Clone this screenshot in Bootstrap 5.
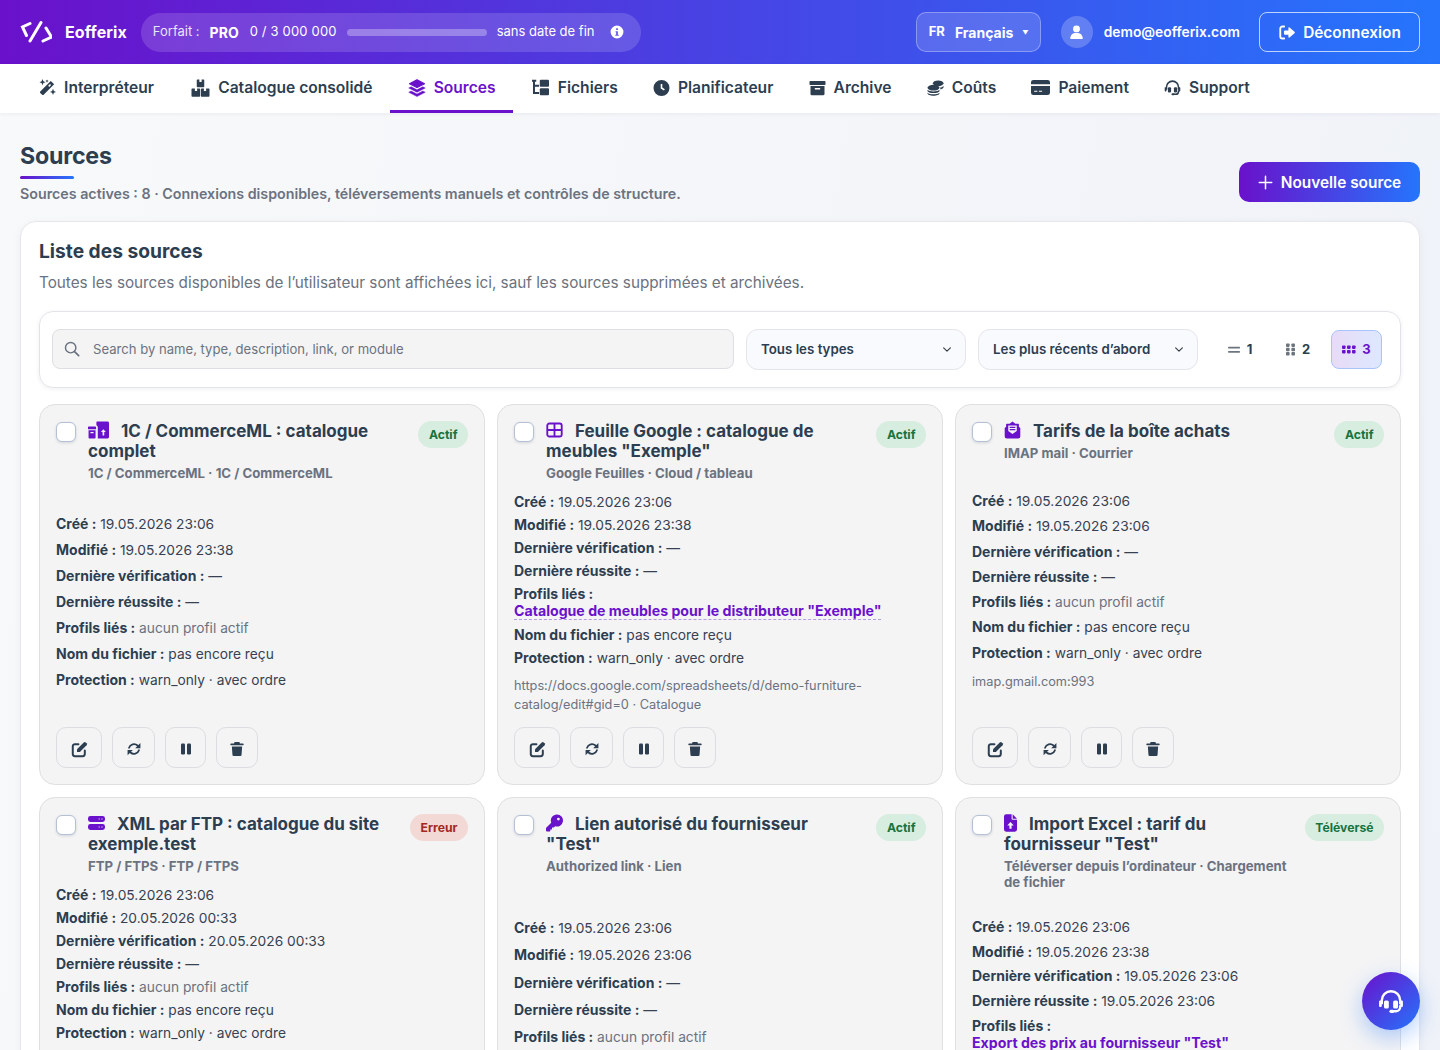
<!DOCTYPE html>
<html lang="fr">
<head>
<meta charset="UTF-8">
<title>Sources - Eofferix</title>
<link href="https://cdn.jsdelivr.net/npm/bootstrap@5.3.0/dist/css/bootstrap.min.css" rel="stylesheet">
<style>
    body { font-family: Inter, "Liberation Sans", sans-serif; background: linear-gradient(100deg, #f8f9fa, #eff2f8); color: #2c3e50; font-size: 14px; }
    .ico { display: inline-block; fill: currentColor; flex: none; }
    .top-bar { height: 64px; padding: 0 20px; background: linear-gradient(90deg, #6a11cb, #2575fc); color: #fff; }
    .logo-name { font-size: 16px; font-weight: 700; margin-left: 13px; letter-spacing: .1px; }
    .logo-ico { width: 32px; height: 24px; fill: none; stroke: #fff; stroke-width: 3; stroke-linecap: round; stroke-linejoin: miter; }
    .plan-pill { height: 39px; margin-left: 14px; width: 500px; padding: 0 12px; border-radius: 20px; background: rgba(255,255,255,.15); font-size: 13px; white-space: nowrap; }
    .plan-pill b { font-size: 14px; font-weight: 700; margin: 0 11px 0 10px; }
    .plan-label { color: rgba(255,255,255,.88); }
    .plan-count { letter-spacing: .17px; }
    .plan-bar { width: 140px; height: 7px; border-radius: 4px; background: rgba(255,255,255,.3); margin: 0 10px; }
    .lang-btn { width: 125px; height: 40px; border-radius: 10px; border: 1px solid rgba(255,255,255,.3); background: rgba(255,255,255,.15); font-weight: 700; font-size: 14px; color: #fff; padding: 0 12px; }
    .lang-btn small { font-size: 13px; font-weight: 700; margin-right: 10px; }
    .lang-caret { font-size: 6px; margin-left: 9px; }
    .user-ava { width: 32px; height: 32px; border-radius: 50%; background: rgba(255,255,255,.22); margin: 0 11px 0 20px; }
    .user-mail { font-size: 13.8px; font-weight: 600; }
    .out-btn { width: 161px; height: 40px; margin-left: 19px; border-radius: 8px; border: 1px solid rgba(255,255,255,.7); color: #fff; font-size: 15.4px; font-weight: 600; gap: 7px; padding: 1px 0 0; }
    .out-btn:hover { color: #fff; }
    .tab-bar { height: 49px; padding: 0 20.5px; background: #fff; box-shadow: 0 1px 4px rgba(20,30,60,.06); }
    .tab-bar .nav-link { height: 49px; padding: 1px 17.6px 0; gap: 8px; color: #2c3e50; font-size: 15.6px; font-weight: 600; border-bottom: 3px solid transparent; white-space: nowrap; }
    .tab-bar .nav-link:first-child { padding-right: 19.6px; }
    .tab-bar .nav-link.active { color: #6a11cb; border-bottom-color: #6a11cb; }
    .page-wrap { padding: 29px 20px 40px; }
    .page-title { font-size: 23.2px; font-weight: 700; line-height: 29px; margin: 0; letter-spacing: -.2px; }
    .title-line { width: 54px; height: 3px; border-radius: 2px; margin: 5px 0 6px; background: linear-gradient(90deg, #6a11cb, #2575fc); }
    .page-sub { font-size: 14.25px; font-weight: 600; color: #6b7280; line-height: 17px; }
    .new-btn { width: 181px; height: 40px; border: 0; border-radius: 10px; background: linear-gradient(90deg, #6a11cb, #2575fc); color: #fff; font-size: 15.4px; font-weight: 600; gap: 8px; padding: 1px 0 0; }
    .new-btn:hover { color: #fff; }
    .list-panel { margin-top: 19px; border: 1px solid #e5e7eb; border-radius: 16px; padding: 17px 18px 18px; box-shadow: 0 2px 8px rgba(20,30,60,.05); }
    .list-title { font-size: 19.2px; font-weight: 700; line-height: 24px; margin: 0; }
    .list-sub { font-size: 15.27px; color: #6b7280; line-height: 20px; margin: 10px 0 18px; }
    .filter-box { padding: 17px 12px; border: 1px solid #e2e4e8; border-radius: 14px; box-shadow: 0 1px 4px rgba(20,30,60,.07); gap: 12px; margin-bottom: 16px; }
    .search-wrap { flex: 1; }
    .search-ico { position: absolute; left: 12px; top: 12px; color: #6b7280; }
    .search-input { height: 40px; padding: 0 12px 0 40px; background: #f4f4f5; border: 1px solid #dedfe2; border-radius: 8px; font-size: 13.1px; }
    .search-input::placeholder { color: #6b7280; }
    .sel-box { width: 220px; height: 41px; border-radius: 12px; border: 1px solid #e4e5ea; background-color: #f9fafd; color: #2c3e50; font-size: 13.3px; font-weight: 600; padding: 0 36px 0 14px; background-size: 12px 9px; }
    .seg-wrap { gap: 8px; margin: 0 6px 0 5px; }
    .seg-btn { height: 39px; width: 50px; padding: 0; gap: 6px; border: 1px solid transparent; border-radius: 8px; font-size: 13px; font-weight: 700; color: #2c3e50; }
    .seg-btn.on { background: linear-gradient(90deg, #e8dbf7, #dde8fe); border-color: #a9c3fb; color: #6a11cb; width: 51px; }
    .src-grid { --bs-gutter-x: 12px; --bs-gutter-y: 12px; }
    .src-card { height: 100%; background: #f4f4f5; border: 1px solid #dfe0e2; border-radius: 16px; padding: 16px; }
    .chk-box { width: 20px; height: 20px; margin: 1px 12px 0 0; flex: none; border-radius: 6px; border: 1px solid #b4c0d4; background: #fff; box-shadow: 0 1px 3px rgba(20,30,60,.15); }
    .src-title { font-size: 17px; font-weight: 700; line-height: 20px; margin: 0; }
    .src-title .ico { height: 18px; margin-right: 12px; vertical-align: -2px; color: #6a11cb; }
    .src-meta { font-size: 13.2px; font-weight: 700; color: #6b7280; line-height: 16px; margin-top: 4px; }
    .stat-pill { height: 27px; padding: 0 10.5px; margin-left: 16px; border-radius: 14px; font-size: 12.2px; font-weight: 700; line-height: 27px; flex: none; }
    .stat-ok { background: #d6ede0; color: #17733f; }
    .stat-err { background: #f3d9d6; color: #a5281f; }
    .fld-list { line-height: 17px; display: flex; flex-direction: column; color: #374151; font-size: 13.75px; }
    /* label and value differ slightly in size, keep the label out of the line box height */
    .fld-list b { font-weight: 700; color: #2c3e50; font-size: 14px; line-height: 0; }
    .fld-muted { color: #6b7280; }
    .fld-link { display: inline-block; color: #6a11cb; font-size: 14.15px; font-weight: 700; text-decoration: none; border-bottom: 1px dashed #b79adf; line-height: 16px; margin-bottom: 1px; vertical-align: top; }
    .fld-url { font-size: 12.75px; line-height: 19px; color: #6b7280; }
    .act-row { gap: 10px; margin-top: auto; }
    .act-btn { height: 41px; width: 42px; padding: 0; border: 1px solid #dcdde0; border-radius: 10px; color: #2c3e50; }
    .act-wide { width: 46px; }
    .act-mid { width: 43px; }
    .act-thin { width: 41px; }
    .fl-a { row-gap: 9px; padding-top: 35px; }
    .fl-b { row-gap: 6px; padding-top: 13px; padding-bottom: 13px; }
    .fl-b .fld-url { margin-top: 3px; }
    .fl-c { row-gap: 8.3px; padding-top: 32px; }
    .fl-c .fld-url { margin-top: 2px; }
    .fl-d { row-gap: 6px; padding-top: 13px; padding-bottom: 20px; }
    .fl-e { row-gap: 10.3px; padding-top: 46px; padding-bottom: 20px; }
    .fl-f { row-gap: 7.7px; padding-top: 29px; padding-bottom: 20px; }
    .help-fab { position: fixed; right: 20px; bottom: 20px; width: 58px; height: 58px; border-radius: 50%; background: linear-gradient(135deg, #6a11cb, #2575fc); color: #fff; box-shadow: 0 8px 22px rgba(37,117,252,.35); }
</style>
</head>
<body>
<svg width="0" height="0" class="position-absolute">
    <symbol id="i-wand" viewBox="0 0 24 24"><path d="M17 2.500l4.500 4.500L7.500 21a1.500 1.500 0 0 1-2 0L3 18.500a1.500 1.500 0 0 1 0-2zM16 6.500l-2.500 2.500 1.500 1.500 2.500-2.500z" fill-rule="evenodd"/><path d="M6 0l1.200 3L10 4.200 7.200 5.400 6 8.400 4.800 5.400 2 4.200 4.800 3zM20 13l1.200 3 2.800 1.200-2.800 1.200-1.200 3-1.200-3-2.800-1.200 2.800-1.200zM12 .5l.7 1.500 1.500.7-1.500.7-.7 1.500-.7-1.500-1.500-.7 1.500-.7z"/></symbol>
    <symbol id="i-boxes" viewBox="0 0 24 24"><path d="M8 .5h2.500v3.500h3V.5H16a1 1 0 0 1 1 1V10a1 1 0 0 1-1 1H8a1 1 0 0 1-1-1V1.500a1 1 0 0 1 1-1z"/><path d="M1 12.500h3.500V16h3v-3.500H10.500a1 1 0 0 1 1 1V22.500a1 1 0 0 1-1 1H1a1 1 0 0 1-1-1v-9a1 1 0 0 1 1-1zM13.500 12.500H16.500V16h3v-3.500H23a1 1 0 0 1 1 1v9a1 1 0 0 1-1 1h-9.500a1 1 0 0 1-1-1v-9a1 1 0 0 1 1-1z"/></symbol>
    <symbol id="i-layers" viewBox="0 0 24 24"><path d="M12 1l10 5.200L12 11.400 2 6.200z" stroke="currentColor" stroke-width="1.500" stroke-linejoin="round"/><path d="M1 12l3.200-1.600L12 14.400l7.800-4 3.200 1.600-11 5.700zM1 17.700l3.200-1.600L12 20.100l7.800-4 3.200 1.600-11 5.700z" stroke="currentColor" stroke-width=".6" stroke-linejoin="round"/></symbol>
    <symbol id="i-tree" viewBox="0 0 24 24"><path d="M0 1h6v2.800H4.200v4.200H10v2.800H4.200v7.400H10V21H1.400V3.800H0z"/><rect x="11" y="1" width="13" height="10" rx="1.500"/><rect x="11" y="13" width="13" height="10" rx="1.500"/></symbol>
    <symbol id="i-clock" viewBox="0 0 24 24"><path fill-rule="evenodd" d="M12 0a12 12 0 1 0 0 24 12 12 0 0 0 0-24zM10.800 6h2.400v5.400l3.800 2.500-1.300 2-4.900-3.300z"/></symbol>
    <symbol id="i-archive" viewBox="0 0 24 24"><rect x="0" y="1.500" width="24" height="6" rx="1.200"/><path fill-rule="evenodd" d="M1.500 9h21V21a2 2 0 0 1-2 2h-17a2 2 0 0 1-2-2zM8 12v2.200h8V12z"/></symbol>
    <symbol id="i-coins" viewBox="0 0 24 24"><ellipse cx="16" cy="5" rx="8" ry="4.300"/><path d="M24 8.500v2.500c0 1.500-2 2.700-4.500 3.300l-.5-3c2-.3 4-1.300 5-2.800z"/><ellipse cx="9" cy="11.500" rx="9" ry="4.300"/><path d="M0 14.800c1.500 1.600 5 2.500 9 2.500s7.500-.9 9-2.500V16c0 2-4 3.600-9 3.600S0 18 0 16zM0 19c1.500 1.600 5 2.500 9 2.500s7.500-.9 9-2.500v1c0 2-4 3.800-9 3.800S0 22 0 20z"/></symbol>
    <symbol id="i-card" viewBox="0 0 24 24"><path d="M3 2.500h18A3 3 0 0 1 24 5.500V8H0V5.500A3 3 0 0 1 3 2.500z"/><path fill-rule="evenodd" d="M0 10h24v8.500a3 3 0 0 1-3 3H3a3 3 0 0 1-3-3zM4 16v1.500h4V16zM10 16v1.500h4V16z"/></symbol>
    <symbol id="i-head" viewBox="0 0 24 24"><path d="M3.500 15v-3.500a8.500 8.500 0 0 1 17 0V15M20.500 16v1.500a4 4 0 0 1-4 4H13" fill="none" stroke="currentColor" stroke-width="2.200"/><rect x="5.500" y="11.500" width="4.500" height="7.500" rx="1.500"/><rect x="14" y="11.500" width="4.500" height="7.500" rx="1.500"/><rect x="1" y="11.500" width="2.500" height="6" rx="1"/><rect x="20.500" y="11.500" width="2.500" height="6" rx="1"/><rect x="10.500" y="20" width="4.500" height="3" rx="1.500"/></symbol>
    <symbol id="i-out" viewBox="0 0 24 24"><path d="M8 3.500H5.500A3 3 0 0 0 2.500 6.500v11a3 3 0 0 0 3 3H8" fill="none" stroke="currentColor" stroke-width="2.600" stroke-linecap="round"/><path d="M14 5.500a1 1 0 0 1 1.600-.7l7 6.200a1.300 1.300 0 0 1 0 2l-7 6.200a1 1 0 0 1-1.600-.7V15H9a1.200 1.200 0 0 1-1.200-1.200v-3.600A1.200 1.200 0 0 1 9 9h5z"/></symbol>
    <symbol id="i-user" viewBox="0 0 24 24"><circle cx="12" cy="7" r="5.500"/><path d="M3 23c-.7 0-1-.5-1-1 0-5 4-8.500 8-8.500h4c4 0 8 3.500 8 8.500 0 .5-.3 1-1 1z"/></symbol>
    <symbol id="i-info" viewBox="0 0 24 24"><path fill-rule="evenodd" d="M12 1a11 11 0 1 0 0 22 11 11 0 0 0 0-22zM10.500 5.500h3v3h-3zM9.500 10.500h4v6h1.500v2H9v-2h1.500v-4h-1z"/></symbol>
    <symbol id="i-plus" viewBox="0 0 24 24"><path d="M12 2v20M2 12h20" stroke="currentColor" stroke-width="2.400" stroke-linecap="round"/></symbol>
    <symbol id="i-search" viewBox="0 0 24 24"><circle cx="10" cy="10" r="7.800" fill="none" stroke="currentColor" stroke-width="2.200"/><path d="M15.800 15.800l6.200 6.200" stroke="currentColor" stroke-width="2.600" stroke-linecap="round"/></symbol>
    <symbol id="i-edit" viewBox="0 0 24 24"><path d="M10.500 4.500H5.500a3 3 0 0 0-3 3v11a3 3 0 0 0 3 3h11a3 3 0 0 0 3-3v-5" fill="none" stroke="currentColor" stroke-width="2.800" stroke-linecap="round"/><path d="M8.500 15.500v-4L18 2a2 2 0 0 1 2.800 0l1.200 1.200a2 2 0 0 1 0 2.800L12.500 15.500z"/></symbol>
    <symbol id="i-sync" viewBox="0 0 24 24"><path d="M3.500 10a9 9 0 0 1 14.500-4l1.500 1.500M20.500 14a9 9 0 0 1-14.500 4l-1.500-1.500" fill="none" stroke="currentColor" stroke-width="3" stroke-linecap="round"/><path d="M23 1.500v9h-9zM1 22.500v-9h9z"/></symbol>
    <symbol id="i-pause" viewBox="0 0 24 24"><rect x="2" y="1" width="8" height="22" rx="2.500"/><rect x="14" y="1" width="8" height="22" rx="2.500"/></symbol>
    <symbol id="i-trash" viewBox="0 0 24 24"><path d="M8.500 0h7a1 1 0 0 1 .9.600L17 2.500h5a1.500 1.500 0 0 1 0 3H2a1.500 1.500 0 0 1 0-3h5l.6-1.900A1 1 0 0 1 8.500 0zM3.200 7.500h17.600l-1 14.500a2 2 0 0 1-2 2H6.200a2 2 0 0 1-2-2z"/></symbol>
    <symbol id="i-eq" viewBox="0 0 14 10"><rect y="1.500" width="13" height="2" rx=".8"/><rect y="6" width="13" height="2" rx=".8"/></symbol>
    <symbol id="i-g2" viewBox="0 0 10 13"><rect x="0" y=".5" width="3.600" height="3.400" rx=".8"/><rect x="5.400" y=".5" width="3.600" height="3.400" rx=".8"/><rect x="0" y="4.800" width="3.600" height="3.400" rx=".8"/><rect x="5.400" y="4.800" width="3.600" height="3.400" rx=".8"/><rect x="0" y="9.100" width="3.600" height="3.400" rx=".8"/><rect x="5.400" y="9.100" width="3.600" height="3.400" rx=".8"/></symbol>
    <symbol id="i-g3" viewBox="0 0 14 9"><rect x="0" y=".5" width="3.600" height="3.400" rx=".8"/><rect x="5" y=".5" width="3.600" height="3.400" rx=".8"/><rect x="10" y=".5" width="3.600" height="3.400" rx=".8"/><rect x="0" y="5" width="3.600" height="3.400" rx=".8"/><rect x="5" y="5" width="3.600" height="3.400" rx=".8"/><rect x="10" y="5" width="3.600" height="3.400" rx=".8"/></symbol>
    <symbol id="i-pack" viewBox="0 0 30 24"><path fill-rule="evenodd" d="M12 1a1 1 0 0 1 1-1h15a2 2 0 0 1 2 2v20a2 2 0 0 1-2 2H14V8a3 3 0 0 0-2-2.800zM22 11l-3.500 4h2.300v5h2.400v-5h2.300z"/><path fill-rule="evenodd" d="M0 8a1 1 0 0 1 1-1h9.500a1 1 0 0 1 1 1v3H0zM.8 12.500h10v10.500a1 1 0 0 1-1 1H2a1.200 1.200 0 0 1-1.200-1.200zM3.500 15v1.800H8V15z"/></symbol>
    <symbol id="i-table" viewBox="0 0 24 24"><rect x="1.800" y="2.800" width="20.400" height="18.400" rx="3" fill="none" stroke="currentColor" stroke-width="2.600"/><path d="M12 3v18M2 12h20" stroke="currentColor" stroke-width="2.600"/></symbol>
    <symbol id="i-mail" viewBox="0 0 24 24"><path fill-rule="evenodd" d="M12 0l4 3h4a1 1 0 0 1 1 1v3.500l2 1.500v12a3 3 0 0 1-3 3H4a3 3 0 0 1-3-3V9l2-1.500V4a1 1 0 0 1 1-1h4zM6 5.500v7.800l6 4.200 6-4.200V5.500zM8 7.500h8v1.800H8zM8 10.700h8v1.800H8z"/></symbol>
    <symbol id="i-server" viewBox="0 0 24 24"><path fill-rule="evenodd" d="M3.500 2h17A3.500 3.500 0 0 1 24 5.500v1.500A3.500 3.500 0 0 1 20.500 10.500h-17A3.500 3.500 0 0 1 0 7V5.500A3.500 3.500 0 0 1 3.500 2zM15 5.500v1.500h1.500V5.500zM19 5.500v1.500h1.500V5.500zM3.500 13.500h17A3.500 3.500 0 0 1 24 17v1.500A3.500 3.500 0 0 1 20.500 22h-17A3.500 3.500 0 0 1 0 18.500V17A3.500 3.500 0 0 1 3.500 13.500zM15 17v1.500h1.500V17zM19 17v1.500h1.500V17z"/></symbol>
    <symbol id="i-key" viewBox="0 0 24 24"><path fill-rule="evenodd" d="M15.500 0a8.500 8.500 0 1 1-2.600 16.600L11 18.500H8.500V21H6v2.400a.6.600 0 0 1-.6.600H1.500a1.500 1.500 0 0 1-1.500-1.500v-3.100a1 1 0 0 1 .3-.7l7.100-7.100A8.500 8.500 0 0 1 15.500 0zM17.500 4.500a2 2 0 1 0 0 4 2 2 0 0 0 0-4z"/></symbol>
    <symbol id="i-file" viewBox="0 0 18 24"><path fill-rule="evenodd" d="M3 0h7.500v6a1.500 1.500 0 0 0 1.500 1.500h6V21a3 3 0 0 1-3 3H3a3 3 0 0 1-3-3V3a3 3 0 0 1 3-3zM12 0l6 6h-6zM9 10.500l-4.500 4.800h3V20h3v-4.700h3z"/></symbol>
</svg>

<header class="top-bar d-flex align-items-center">
    <svg class="ico logo-ico" viewBox="0 0 32 24"><path d="M10 3.500L2.500 7l4 8.500M21 2.500L10 21M26 8l5.500 9-8.500 4"/></svg>
    <span class="logo-name">Eofferix</span>
    <div class="plan-pill d-flex align-items-center">
        <span class="plan-label">Forfait :</span><b>PRO</b><span class="plan-count">0 / 3 000 000</span>
        <span class="plan-bar"></span>
        <span>sans date de fin</span>
        <svg class="ico ms-3" width="14" height="14"><use href="#i-info"/></svg>
    </div>
    <div class="ms-auto d-flex align-items-center">
        <button class="lang-btn d-flex align-items-center" type="button"><small>FR</small>Français<span class="lang-caret">▼</span></button>
        <span class="user-ava d-flex align-items-center justify-content-center"><svg class="ico" width="15" height="16"><use href="#i-user"/></svg></span>
        <span class="user-mail">demo@eofferix.com</span>
        <a class="btn out-btn d-flex align-items-center justify-content-center" href="#"><svg class="ico" width="18" height="17"><use href="#i-out"/></svg>Déconnexion</a>
    </div>
</header>

<nav class="nav tab-bar">
    <a class="nav-link d-flex align-items-center" href="#"><svg class="ico" width="18" height="18"><use href="#i-wand"/></svg>Interpréteur</a>
    <a class="nav-link d-flex align-items-center" href="#"><svg class="ico" width="19" height="18"><use href="#i-boxes"/></svg>Catalogue consolidé</a>
    <a class="nav-link active d-flex align-items-center" href="#"><svg class="ico" width="18" height="18"><use href="#i-layers"/></svg>Sources</a>
    <a class="nav-link d-flex align-items-center" href="#"><svg class="ico" width="19" height="17"><use href="#i-tree"/></svg>Fichiers</a>
    <a class="nav-link d-flex align-items-center" href="#"><svg class="ico" width="17" height="16"><use href="#i-clock"/></svg>Planificateur</a>
    <a class="nav-link d-flex align-items-center" href="#"><svg class="ico" width="17" height="16"><use href="#i-archive"/></svg>Archive</a>
    <a class="nav-link d-flex align-items-center" href="#"><svg class="ico" width="17" height="16"><use href="#i-coins"/></svg>Coûts</a>
    <a class="nav-link d-flex align-items-center" href="#"><svg class="ico" width="19" height="19"><use href="#i-card"/></svg>Paiement</a>
    <a class="nav-link d-flex align-items-center" href="#"><svg class="ico" width="17" height="17"><use href="#i-head"/></svg>Support</a>
</nav>

<main class="page-wrap">
    <div class="d-flex justify-content-between align-items-end">
        <div>
            <h1 class="page-title">Sources</h1>
            <div class="title-line"></div>
            <div class="page-sub">Sources actives : 8 · Connexions disponibles, téléversements manuels et contrôles de structure.</div>
        </div>
        <a class="btn new-btn d-flex align-items-center justify-content-center" href="#"><svg class="ico" width="15" height="15"><use href="#i-plus"/></svg>Nouvelle source</a>
    </div>

    <section class="card list-panel">
        <h2 class="list-title">Liste des sources</h2>
        <p class="list-sub">Toutes les sources disponibles de l’utilisateur sont affichées ici, sauf les sources supprimées et archivées.</p>

        <div class="filter-box d-flex align-items-center">
            <div class="search-wrap position-relative align-self-start">
                <svg class="ico search-ico" width="16" height="16"><use href="#i-search"/></svg>
                <input class="form-control search-input" type="text" placeholder="Search by name, type, description, link, or module">
            </div>
            <select class="form-select sel-box"><option>Tous les types</option></select>
            <select class="form-select sel-box"><option>Les plus récents d’abord</option></select>
            <div class="seg-wrap d-flex align-items-center">
                <button class="btn seg-btn d-flex align-items-center justify-content-center" type="button"><svg class="ico text-secondary" width="13" height="10"><use href="#i-eq"/></svg>1</button>
                <button class="btn seg-btn d-flex align-items-center justify-content-center" type="button"><svg class="ico text-secondary" width="10" height="13"><use href="#i-g2"/></svg>2</button>
                <button class="btn seg-btn on d-flex align-items-center justify-content-center" type="button"><svg class="ico" width="14" height="9"><use href="#i-g3"/></svg>3</button>
            </div>
        </div>

        <div class="row row-cols-3 src-grid">
            <div class="col">
                <article class="src-card d-flex flex-column">
                    <div class="d-flex align-items-start">
                        <span class="chk-box"></span>
                        <div class="flex-grow-1">
                            <h3 class="src-title"><svg class="ico" width="21" height="18"><use href="#i-pack"/></svg>1C / CommerceML : catalogue complet</h3>
                            <div class="src-meta">1C / CommerceML · 1C / CommerceML</div>
                        </div>
                        <span class="stat-pill stat-ok">Actif</span>
                    </div>
                    <div class="fld-list fl-a">
                        <div><b>Créé :</b> 19.05.2026 23:06</div>
                        <div><b>Modifié :</b> 19.05.2026 23:38</div>
                        <div><b>Dernière vérification :</b> —</div>
                        <div><b>Dernière réussite :</b> —</div>
                        <div><b>Profils liés :</b> <span class="fld-muted">aucun profil actif</span></div>
                        <div><b>Nom du fichier :</b> pas encore reçu</div>
                        <div><b>Protection :</b> warn_only · avec ordre</div>
                    </div>
                    <div class="act-row d-flex">
                        <button class="btn act-btn act-wide" type="button"><svg class="ico" width="17" height="17"><use href="#i-edit"/></svg></button>
                        <button class="btn act-btn act-mid" type="button"><svg class="ico" width="14" height="14"><use href="#i-sync"/></svg></button>
                        <button class="btn act-btn act-thin" type="button"><svg class="ico" width="12" height="12"><use href="#i-pause"/></svg></button>
                        <button class="btn act-btn" type="button"><svg class="ico" width="14" height="14"><use href="#i-trash"/></svg></button>
                    </div>
                </article>
            </div>
            <div class="col">
                <article class="src-card d-flex flex-column">
                    <div class="d-flex align-items-start">
                        <span class="chk-box"></span>
                        <div class="flex-grow-1">
                            <h3 class="src-title"><svg class="ico" width="17" height="18"><use href="#i-table"/></svg>Feuille Google : catalogue de meubles "Exemple"</h3>
                            <div class="src-meta">Google Feuilles · Cloud / tableau</div>
                        </div>
                        <span class="stat-pill stat-ok">Actif</span>
                    </div>
                    <div class="fld-list fl-b">
                        <div><b>Créé :</b> 19.05.2026 23:06</div>
                        <div><b>Modifié :</b> 19.05.2026 23:38</div>
                        <div><b>Dernière vérification :</b> —</div>
                        <div><b>Dernière réussite :</b> —</div>
                        <div><b>Profils liés :</b><br><a class="fld-link" href="#">Catalogue de meubles pour le distributeur "Exemple"</a></div>
                        <div><b>Nom du fichier :</b> pas encore reçu</div>
                        <div><b>Protection :</b> warn_only · avec ordre</div>
                        <div class="fld-url">https://docs.google.com/spreadsheets/d/demo-furniture-catalog/edit#gid=0 · Catalogue</div>
                    </div>
                    <div class="act-row d-flex">
                        <button class="btn act-btn act-wide" type="button"><svg class="ico" width="17" height="17"><use href="#i-edit"/></svg></button>
                        <button class="btn act-btn act-mid" type="button"><svg class="ico" width="14" height="14"><use href="#i-sync"/></svg></button>
                        <button class="btn act-btn act-thin" type="button"><svg class="ico" width="12" height="12"><use href="#i-pause"/></svg></button>
                        <button class="btn act-btn" type="button"><svg class="ico" width="14" height="14"><use href="#i-trash"/></svg></button>
                    </div>
                </article>
            </div>
            <div class="col">
                <article class="src-card d-flex flex-column">
                    <div class="d-flex align-items-start">
                        <span class="chk-box"></span>
                        <div class="flex-grow-1">
                            <h3 class="src-title"><svg class="ico" width="17" height="18"><use href="#i-mail"/></svg>Tarifs de la boîte achats</h3>
                            <div class="src-meta">IMAP mail · Courrier</div>
                        </div>
                        <span class="stat-pill stat-ok">Actif</span>
                    </div>
                    <div class="fld-list fl-c">
                        <div><b>Créé :</b> 19.05.2026 23:06</div>
                        <div><b>Modifié :</b> 19.05.2026 23:06</div>
                        <div><b>Dernière vérification :</b> —</div>
                        <div><b>Dernière réussite :</b> —</div>
                        <div><b>Profils liés :</b> <span class="fld-muted">aucun profil actif</span></div>
                        <div><b>Nom du fichier :</b> pas encore reçu</div>
                        <div><b>Protection :</b> warn_only · avec ordre</div>
                        <div class="fld-url">imap.gmail.com:993</div>
                    </div>
                    <div class="act-row d-flex">
                        <button class="btn act-btn act-wide" type="button"><svg class="ico" width="17" height="17"><use href="#i-edit"/></svg></button>
                        <button class="btn act-btn act-mid" type="button"><svg class="ico" width="14" height="14"><use href="#i-sync"/></svg></button>
                        <button class="btn act-btn act-thin" type="button"><svg class="ico" width="12" height="12"><use href="#i-pause"/></svg></button>
                        <button class="btn act-btn" type="button"><svg class="ico" width="14" height="14"><use href="#i-trash"/></svg></button>
                    </div>
                </article>
            </div>
            <div class="col">
                <article class="src-card d-flex flex-column">
                    <div class="d-flex align-items-start">
                        <span class="chk-box"></span>
                        <div class="flex-grow-1">
                            <h3 class="src-title"><svg class="ico" width="17" height="18"><use href="#i-server"/></svg>XML par FTP : catalogue du site exemple.test</h3>
                            <div class="src-meta">FTP / FTPS · FTP / FTPS</div>
                        </div>
                        <span class="stat-pill stat-err">Erreur</span>
                    </div>
                    <div class="fld-list fl-d">
                        <div><b>Créé :</b> 19.05.2026 23:06</div>
                        <div><b>Modifié :</b> 20.05.2026 00:33</div>
                        <div><b>Dernière vérification :</b> 20.05.2026 00:33</div>
                        <div><b>Dernière réussite :</b> —</div>
                        <div><b>Profils liés :</b> <span class="fld-muted">aucun profil actif</span></div>
                        <div><b>Nom du fichier :</b> pas encore reçu</div>
                        <div><b>Protection :</b> warn_only · avec ordre</div>
                    </div>
                </article>
            </div>
            <div class="col">
                <article class="src-card d-flex flex-column">
                    <div class="d-flex align-items-start">
                        <span class="chk-box"></span>
                        <div class="flex-grow-1">
                            <h3 class="src-title"><svg class="ico" width="17" height="18"><use href="#i-key"/></svg>Lien autorisé du fournisseur "Test"</h3>
                            <div class="src-meta">Authorized link · Lien</div>
                        </div>
                        <span class="stat-pill stat-ok">Actif</span>
                    </div>
                    <div class="fld-list fl-e">
                        <div><b>Créé :</b> 19.05.2026 23:06</div>
                        <div><b>Modifié :</b> 19.05.2026 23:06</div>
                        <div><b>Dernière vérification :</b> —</div>
                        <div><b>Dernière réussite :</b> —</div>
                        <div><b>Profils liés :</b> <span class="fld-muted">aucun profil actif</span></div>
                    </div>
                </article>
            </div>
            <div class="col">
                <article class="src-card d-flex flex-column">
                    <div class="d-flex align-items-start">
                        <span class="chk-box"></span>
                        <div class="flex-grow-1">
                            <h3 class="src-title"><svg class="ico" width="13" height="18"><use href="#i-file"/></svg>Import Excel : tarif du fournisseur "Test"</h3>
                            <div class="src-meta">Téléverser depuis l’ordinateur · Chargement de fichier</div>
                        </div>
                        <span class="stat-pill stat-ok">Téléversé</span>
                    </div>
                    <div class="fld-list fl-f">
                        <div><b>Créé :</b> 19.05.2026 23:06</div>
                        <div><b>Modifié :</b> 19.05.2026 23:38</div>
                        <div><b>Dernière vérification :</b> 19.05.2026 23:06</div>
                        <div><b>Dernière réussite :</b> 19.05.2026 23:06</div>
                        <div><b>Profils liés :</b><br><a class="fld-link" href="#">Export des prix au fournisseur "Test"</a></div>
                    </div>
                </article>
            </div>
        </div>
    </section>
</main>

<a class="help-fab d-flex align-items-center justify-content-center" href="#"><svg class="ico" width="26" height="26"><use href="#i-head"/></svg></a>

<script src="https://cdn.jsdelivr.net/npm/bootstrap@5.3.0/dist/js/bootstrap.bundle.min.js"></script>
</body>
</html>
